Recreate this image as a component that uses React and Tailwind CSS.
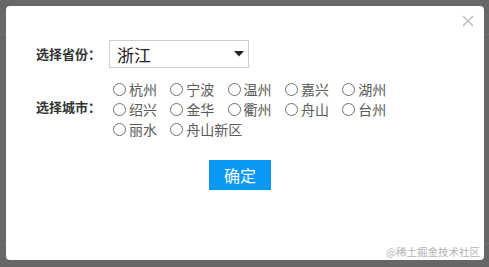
import React from "react";

const rows = [
  ["杭州", "宁波", "温州", "嘉兴", "湖州"],
  ["绍兴", "金华", "衢州", "舟山", "台州"],
  ["丽水", "舟山新区"],
];

function Radio({ label }) {
  return (
    <div className="flex items-center h-[20px] mr-[13px]">
      <span className="w-[13px] h-[13px] rounded-full border border-[#6f6f6f] bg-white box-border" />
      <span className="ml-[3px] text-[14px] leading-[20px] text-[#5a5a5a]">{label}</span>
    </div>
  );
}

export default function App() {
  return (
    <div
      className="relative w-[489px] h-[267px] bg-[#676767] overflow-hidden antialiased"
      style={{ fontFamily: '"Microsoft YaHei", "Noto Sans CJK SC", "Noto Sans", sans-serif' }}
    >
      <div className="h-[35px] border-b border-[#727272]" />
      <div className="h-[208px]" />
      <div className="border-t border-[#727272]" />

      <div className="absolute left-[6px] top-[6px] w-[478px] h-[254px] bg-white rounded-[4px]">
        <div className="absolute right-[10px] top-[9px] w-[12px] h-[12px]">
          <svg width="12" height="12" viewBox="0 0 12 12">
            <path d="M1 1 L11 11 M11 1 L1 11" stroke="#c2c2c2" strokeWidth="1.6" />
          </svg>
        </div>

        <div className="pl-[30px] pt-[34px] flex flex-col">
          <div className="flex items-center h-[28px]">
            <div className="w-[73px] text-[13px] font-bold text-[#333]">选择省份：</div>
            <div className="w-[140px] h-[28px] border border-[#cfcfcf] flex items-center pl-[7px] pr-[4px] box-border">
              <span className="flex-1 text-[17px] text-[#222] leading-none">浙江</span>
              <svg width="10" height="6" viewBox="0 0 10 6">
                <path d="M0 0 L10 0 L5 5.5 Z" fill="#222" />
              </svg>
            </div>
          </div>

          <div className="flex items-center mt-[11px]">
            <div className="w-[77px] text-[13px] font-bold text-[#333] -mt-[4px]">选择城市：</div>
            <div className="w-[300px] flex flex-col">
              {rows.map((r, i) => (
                <div key={i} className="flex">
                  {r.map((c) => (
                    <div key={c} className={c.length === 2 ? "w-[57.3px]" : ""}>
                      <Radio label={c} />
                    </div>
                  ))}
                </div>
              ))}
            </div>
          </div>

          <div className="mt-[21px] ml-[173px]">
            <button className="w-[62px] h-[30px] bg-[#0a98f7] text-white text-[16px] leading-[30px]">
              确定
            </button>
          </div>
        </div>

        <div className="absolute right-[4px] bottom-[1px] text-[10.5px] text-[#b4b4b4] leading-[14px]">
          @稀土掘金技术社区
        </div>
      </div>
    </div>
  );
}
